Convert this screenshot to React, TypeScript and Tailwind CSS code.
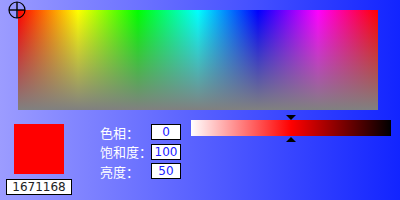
import React from "react";

const fields = [
  { label: "色相：", value: "0" },
  { label: "饱和度：", value: "100" },
  { label: "亮度：", value: "50" },
];

export default function App() {
  return (
    <div className="relative w-[400px] h-[200px] overflow-hidden bg-[linear-gradient(to_right,#9c9cff,#1224ff)] pt-[10px] font-['DejaVu_Sans',sans-serif]">
      {/* Colour palette */}
      <div className="relative ml-[18px] w-[360px] h-[100px] bg-[linear-gradient(to_right,#f00,#ff0,#0f0,#0ff,#00f,#f0f,#f00)]">
        <div className="w-full h-full bg-[linear-gradient(to_bottom,rgba(128,128,128,0),#808080)]" />
        <svg
          className="absolute -left-[10px] -top-[9px]"
          width="18"
          height="18"
          viewBox="0 0 18 18"
        >
          <circle cx="9" cy="9" r="8" fill="none" stroke="#000" strokeWidth="1.2" />
          <line x1="1" y1="9" x2="17" y2="9" stroke="#000" strokeWidth="1.4" />
          <line x1="9" y1="1" x2="9" y2="17" stroke="#000" strokeWidth="1.4" />
        </svg>
      </div>

      <div className="flex">
        {/* Swatch + value */}
        <div className="flex flex-col pl-[6px]">
          <div className="ml-[8px] mt-[14px] w-[50px] h-[50px] bg-[#ff0000]" />
          <div className="mt-[5px] w-[66px] h-[16px] border border-black bg-white flex items-center justify-center text-[12px] leading-none text-[#222]">
            1671168
          </div>
        </div>

        {/* HSL fields */}
        <div className="ml-[28px] mt-[14px] flex flex-col gap-[3.5px]">
          {fields.map((f) => (
            <div key={f.label} className="flex items-center h-[16px]">
              <span className="w-[51px] shrink-0 whitespace-nowrap text-[13px] leading-none text-white font-['Noto_Sans_CJK_SC',sans-serif]">
                {f.label}
              </span>
              <div className="w-[30px] h-[16px] shrink-0 border border-black bg-white flex items-center justify-center text-[12px] leading-none text-[#2020ff]">
                {f.value}
              </div>
            </div>
          ))}
        </div>

        {/* Lightness bar */}
        <div className="relative ml-[10px] mt-[10px] w-[200px] h-[16px] bg-[linear-gradient(to_right,#fff,#f00,#000)]">
          <svg className="absolute left-[95px] -top-[5px]" width="10" height="5" viewBox="0 0 10 5">
            <polygon points="0,0 10,0 5,5" fill="#000" />
          </svg>
          <svg className="absolute left-[95px] top-[17px]" width="10" height="5" viewBox="0 0 10 5">
            <polygon points="0,5 10,5 5,0" fill="#000" />
          </svg>
        </div>
      </div>
    </div>
  );
}
